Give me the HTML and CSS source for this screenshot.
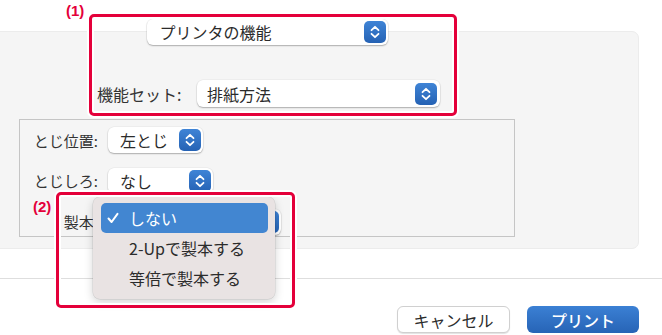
FILE: index.html
```html
<!DOCTYPE html>
<html lang="ja">
<head>
  <meta charset="UTF-8">
  <meta name="viewport" content="width=device-width, initial-scale=1.0">
  <title>プリント</title>
  <link rel="stylesheet" href="styles.css">
</head>
<body>
  <div class="page">
    <div class="panel">
      <div class="panel-inner">
        <div class="feature-row">
          <div class="popup popup-feature">
            <span class="popup-text">プリンタの機能</span>
            <span class="stepper"><svg viewBox="0 0 22 22"><path d="M7.5 9.2 L11 5.8 L14.5 9.2 M7.5 12.8 L11 16.2 L14.5 12.8"/></svg></span>
          </div>
        </div>
        <div class="preset-row">
          <span class="preset-label">機能セット:</span>
          <div class="popup popup-preset">
            <span class="popup-text">排紙方法</span>
            <span class="stepper"><svg viewBox="0 0 22 22"><path d="M7.5 9.2 L11 5.8 L14.5 9.2 M7.5 12.8 L11 16.2 L14.5 12.8"/></svg></span>
          </div>
        </div>
        <div class="group">
          <span class="group-label">とじ位置:</span>
          <div class="popup popup-edge">
            <span class="popup-text">左とじ</span>
            <span class="stepper"><svg viewBox="0 0 22 22"><path d="M7.5 9.2 L11 5.8 L14.5 9.2 M7.5 12.8 L11 16.2 L14.5 12.8"/></svg></span>
          </div>
          <span class="group-label">とじしろ:</span>
          <div class="popup popup-margin">
            <span class="popup-text">なし</span>
            <span class="stepper"><svg viewBox="0 0 22 22"><path d="M7.5 9.2 L11 5.8 L14.5 9.2 M7.5 12.8 L11 16.2 L14.5 12.8"/></svg></span>
          </div>
          <span class="group-label">製本:</span>
          <!-- value is covered by the open menu -->
          <div class="popup popup-booklet">
            <span class="popup-text"></span>
            <span class="stepper"><svg viewBox="0 0 22 22"><path d="M7.5 9.2 L11 5.8 L14.5 9.2 M7.5 12.8 L11 16.2 L14.5 12.8"/></svg></span>
          </div>
        </div>
      </div>
    </div>

    <div class="divider"></div>

    <div class="actions">
      <button class="btn btn-cancel">キャンセル</button>
      <button class="btn btn-print">プリント</button>
    </div>

    <!-- dropdown menu opened over 製本 -->
    <div class="menu">
      <div class="menu-item selected">
        <span class="check"><svg viewBox="0 0 12 12"><path d="M1.5 6.5 L4.6 10 L10.5 1.8"/></svg></span>
        <span>しない</span>
      </div>
      <div class="menu-item"><span class="check"></span><span>2-Upで製本する</span></div>
      <div class="menu-item"><span class="check"></span><span>等倍で製本する</span></div>
    </div>

    <!-- callouts -->
    <div class="callout callout-1"></div>
    <span class="callout-label label-1">(1)</span>
    <div class="callout callout-2"></div>
    <span class="callout-label label-2">(2)</span>
  </div>
</body>
</html>
```

FILE: styles.css
```css
/* Basic Reset */
* {
  box-sizing: border-box;
  margin: 0;
  padding: 0;
}
body {
  background-color: #ffffff;
  color: #2b2b2b;
  font-family: "Noto Sans CJK JP", "Noto Sans", sans-serif;
  overflow: hidden;
}
.page {
  position: relative;
  width: 662px;
  height: 335px;
  overflow: hidden;
}
/* Settings panel */
.panel {
  margin-top: 31px;
  margin-left: -10px;
  width: 649px;
  height: 218px;
  padding-left: 28px;
  background-color: #f5f5f5;
  border: 1px solid #ececec;
  border-radius: 0 7px 7px 0;
}
.panel-inner {
  width: 496px;
}
.feature-row {
  display: flex;
  justify-content: center;
  margin-top: -13px;
}
.preset-row {
  display: flex;
  align-items: center;
  margin-top: 35px;
  padding-left: 78px;
}
.preset-label {
  font-size: 16px;
  width: 100px;
  color: #333;
}
/* Popup buttons */
.popup {
  display: flex;
  align-items: center;
  justify-content: space-between;
  height: 26px;
  padding: 0 2px 0 12px;
  background-color: #ffffff;
  border-radius: 6px;
  box-shadow: 0 1px 1.5px rgba(0, 0, 0, 0.28), 0 0 0 0.5px rgba(0, 0, 0, 0.06);
  font-size: 16px;
  line-height: 1;
}
.popup-feature {
  width: 241px;
  padding-left: 13px;
}
.popup-preset {
  width: 243px;
  height: 27px;
  padding-left: 10px;
  padding-right: 3px;
}
.popup-edge {
  width: 95px;
}
.popup-margin {
  width: 105px;
}
.popup-booklet {
  width: 173px;
}
.stepper {
  display: flex;
  width: 22px;
  height: 22px;
  border-radius: 5px;
  background: linear-gradient(#3f84d6, #2562b4);
}
.stepper svg {
  width: 22px;
  height: 22px;
  fill: none;
  stroke: #ffffff;
  stroke-width: 1.8;
  stroke-linecap: round;
  stroke-linejoin: round;
}
/* Group box */
.group {
  display: grid;
  grid-template-columns: 78px auto;
  column-gap: 10px;
  row-gap: 12px;
  align-items: center;
  justify-items: start;
  margin-top: 12px;
  height: 118px;
  padding-top: 6px;
  border: 1px solid #c5c5c5;
}
.group-label {
  justify-self: end;
  font-size: 15px;
  color: #333;
}
/* Footer */
.divider {
  margin-top: 29px;
  height: 1px;
  background-color: #dedede;
}
.actions {
  display: flex;
  justify-content: flex-end;
  gap: 17px;
  margin-top: 27px;
  padding-right: 23px;
}
.btn {
  height: 27px;
  border-radius: 6px;
  font-family: "Noto Sans CJK JP", sans-serif;
  font-size: 16px;
  line-height: 1;
}
.btn-cancel {
  width: 113px;
  background-color: #ffffff;
  color: #2b2b2b;
  border: 1px solid #d0d0d0;
  box-shadow: 0 1px 1px rgba(0, 0, 0, 0.12);
}
.btn-print {
  width: 112px;
  background: linear-gradient(#3b80d4, #2764b6);
  color: #ffffff;
  border: none;
  font-weight: 500;
}
/* Dropdown menu */
.menu {
  position: absolute;
  left: 93px;
  top: 197px;
  width: 182px;
  padding: 6px 7px 6px 8px;
  background-color: #e9e3e3;
  border-radius: 7px;
  box-shadow: 0 3px 10px rgba(0, 0, 0, 0.18), 0 0 0 0.5px rgba(0, 0, 0, 0.12);
}
.menu-item {
  display: flex;
  align-items: center;
  height: 30px;
  padding-left: 6px;
  border-radius: 5px;
  font-size: 16px;
  color: #2b2b2b;
}
.menu-item.selected {
  background-color: #4286d1;
  color: #ffffff;
}
.check {
  display: flex;
  width: 22px;
}
.check svg {
  width: 12px;
  height: 12px;
  fill: none;
  stroke: #ffffff;
  stroke-width: 2;
  stroke-linecap: round;
  stroke-linejoin: round;
}
/* Red callouts */
.callout {
  position: absolute;
  border: 3px solid #e4003a;
  border-radius: 5px;
  box-shadow: 0 0 0 2px #ffffff, inset 0 0 0 2px #ffffff;
}
.callout-1 {
  left: 89px;
  top: 14px;
  width: 368px;
  height: 102px;
}
.callout-2 {
  left: 56px;
  top: 192px;
  width: 239px;
  height: 116px;
}
.callout-label {
  position: absolute;
  font-family: "Liberation Sans", Arial, sans-serif;
  font-weight: bold;
  font-size: 15px;
  line-height: 1;
  color: #e4003a;
}
.label-1 {
  left: 66px;
  top: 3px;
}
.label-2 {
  left: 33px;
  top: 199px;
}
```
